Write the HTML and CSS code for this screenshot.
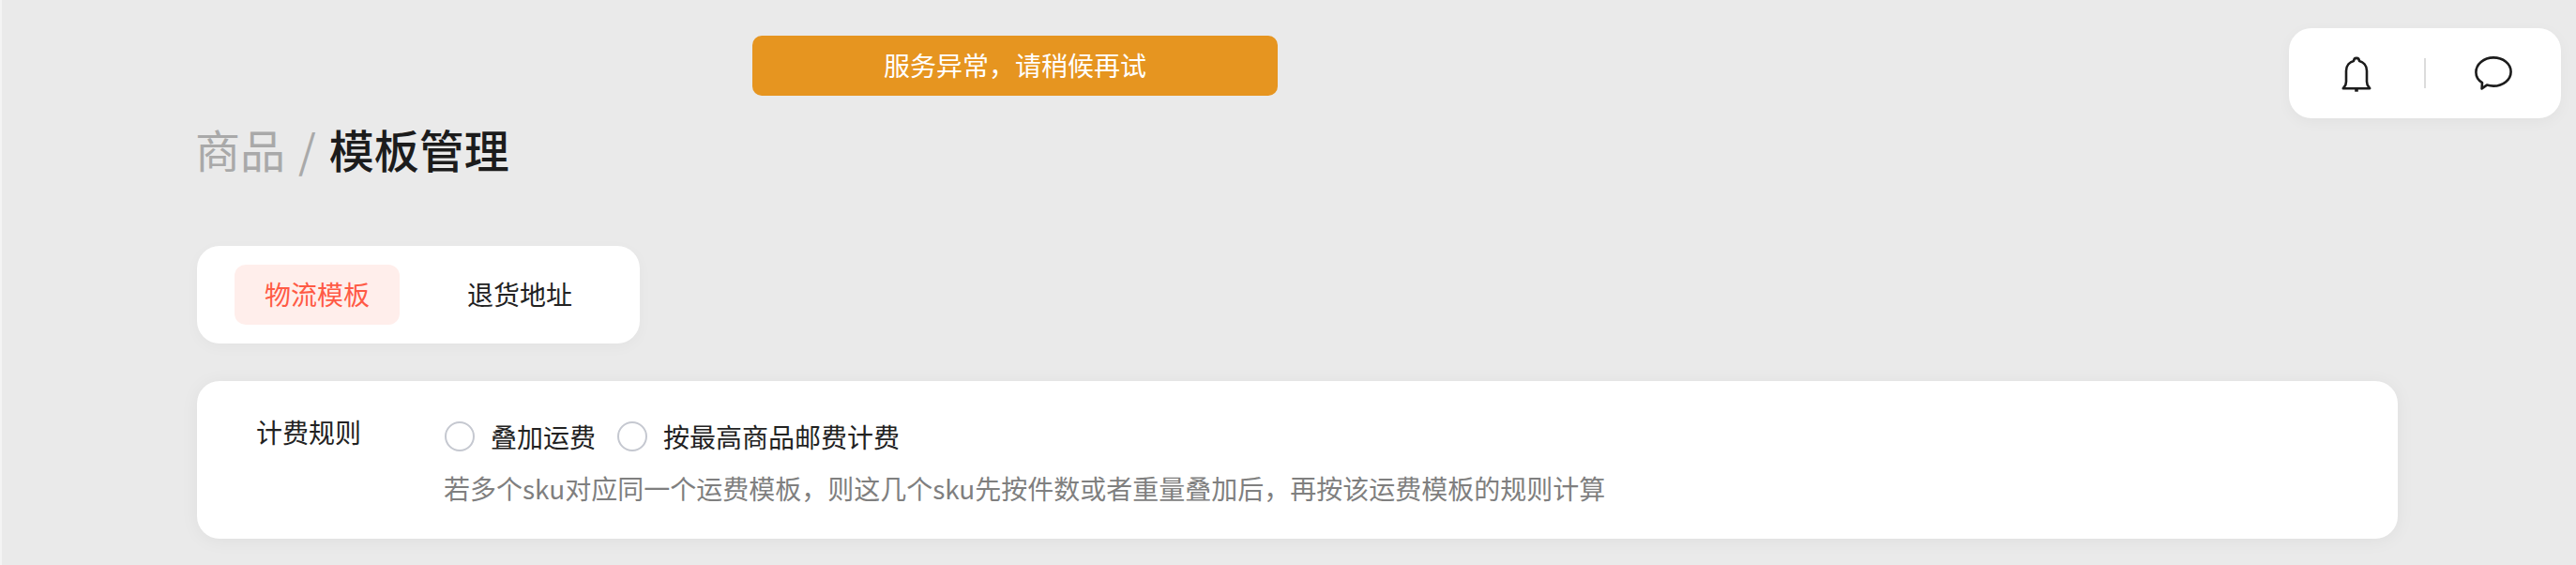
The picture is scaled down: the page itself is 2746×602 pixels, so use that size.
FILE: index.html
```html
<!DOCTYPE html>
<html lang="zh-CN">
<head>
<meta charset="utf-8">
<title>模板管理</title>
<link rel="stylesheet" href="styles.css">
</head>
<body>
<div class="toast">服务异常，请稍候再试</div>
<div class="actions">
  <svg class="icon-bell" viewBox="0 0 32 38" width="32" height="38" fill="none" stroke="#1c1c1c" stroke-width="2.6" stroke-linejoin="round">
    <path d="M1.8 34.2 C2.6 32.6 5 31.5 5 27 V15.5 C5 9.5 9 6 13 5 C13.4 0.8 18.6 0.8 19 5 C23 6 27 9.5 27 15.5 V27 C27 31.5 29.4 32.6 30.2 34.2 Z"/>
    <path d="M14.2 36.2 H17.8" stroke-width="3"/>
  </svg>
  <span class="divider"></span>
  <svg class="icon-chat" viewBox="0 0 40 36" width="40" height="36" fill="none" stroke="#1c1c1c" stroke-width="2.6" stroke-linejoin="round">
    <path d="M8 28.2 C3.6 25.4 1.4 21.6 1.4 17 C1.4 8.6 9.6 1.4 20 1.4 C30.4 1.4 38.6 8 38.6 16.4 C38.6 24.8 30.4 31.6 20 31.6 C17.4 31.6 15 31.2 13 30.6 L7.6 34.4 Z"/>
  </svg>
</div>
<main class="page">
  <h1 class="title"><span class="crumb">商品</span><span class="slash">/</span><span class="current">模板管理</span></h1>
  <nav class="tabs">
    <span class="tab tab-active">物流模板</span>
    <span class="tab">退货地址</span>
  </nav>
  <section class="card">
    <div class="label">计费规则</div>
    <div class="field">
      <div class="options">
        <label class="option"><span class="radio"></span>叠加运费</label>
        <label class="option"><span class="radio"></span>按最高商品邮费计费</label>
      </div>
      <p class="hint">若多个sku对应同一个运费模板，则这几个sku先按件数或者重量叠加后，再按该运费模板的规则计算</p>
    </div>
  </section>
</main>
</body>
</html>
```
FILE: styles.css
```css
* { box-sizing: border-box; }
html, body { margin: 0; height: 100%; }
body {
  background: #eaeaea;
  border-left: 2px solid #f4f4f4;
  overflow: hidden;
  font-family: "Noto Sans CJK SC", "Liberation Sans", sans-serif;
  font-weight: 400;
  color: #222;
}
.toast {
  position: absolute;
  left: 802px;
  top: 38px;
  width: 560px;
  height: 64px;
  border-radius: 10px;
  background: #e69520;
  color: #fff;
  font-size: 28px;
  line-height: 62px;
  text-align: center;
}
.actions {
  position: absolute;
  left: 2440px;
  top: 30px;
  width: 290px;
  height: 96px;
  border-radius: 24px;
  background: #fff;
  box-shadow: 0 4px 16px rgba(0, 0, 0, 0.04);
  display: flex;
  align-items: center;
}
.icon-bell { margin-left: 56px; margin-top: 2px; }
.divider { width: 2px; height: 32px; background: #dcdcdc; margin-left: 56px; }
.icon-chat { margin-left: 52px; }
.page { padding: 130px 190px 0 208px; }
.title {
  margin: 0 0 0 -2px;
  display: flex;
  align-items: center;
  height: 56px;
  font-size: 48px;
  line-height: 56px;
  font-weight: 500;
}
.crumb { color: #a9a9a9; font-weight: 400; }
.slash { color: #a9a9a9; font-weight: 400; margin: 0 14px 0 14px; }
.current { color: #1c1c1c; }
.tabs {
  margin-top: 76px;
  width: 472px;
  height: 104px;
  padding: 20px 40px;
  border-radius: 24px;
  background: #fff;
  box-shadow: 0 4px 16px rgba(0, 0, 0, 0.03);
  display: flex;
  gap: 40px;
}
.tab {
  flex: none;
  width: 176px;
  height: 64px;
  line-height: 62px;
  text-align: center;
  font-size: 28px;
  border-radius: 12px;
}
.tab-active { background: #ffeeeb; color: #ff5a45; }
.card {
  margin-top: 40px;
  height: 168px;
  padding: 36px 64px 0;
  border-radius: 24px;
  background: #fff;
  box-shadow: 0 2px 20px rgba(0, 0, 0, 0.05);
  display: flex;
}
.label { width: 200px; margin-left: -1px; margin-right: 1px; font-size: 28px; line-height: 36px; }
.field { flex: 1; }
.options { display: flex; gap: 23px; margin-top: 6px; }
.option { display: flex; align-items: center; gap: 17px; font-size: 28px; line-height: 34px; }
.radio {
  width: 32px;
  height: 32px;
  border-radius: 50%;
  border: 2px solid #c5c8d0;
  background: #fff;
}
.hint { margin: 20px 0 0 -1px; font-size: 28px; line-height: 36px; color: #7f7f7f; }
```
